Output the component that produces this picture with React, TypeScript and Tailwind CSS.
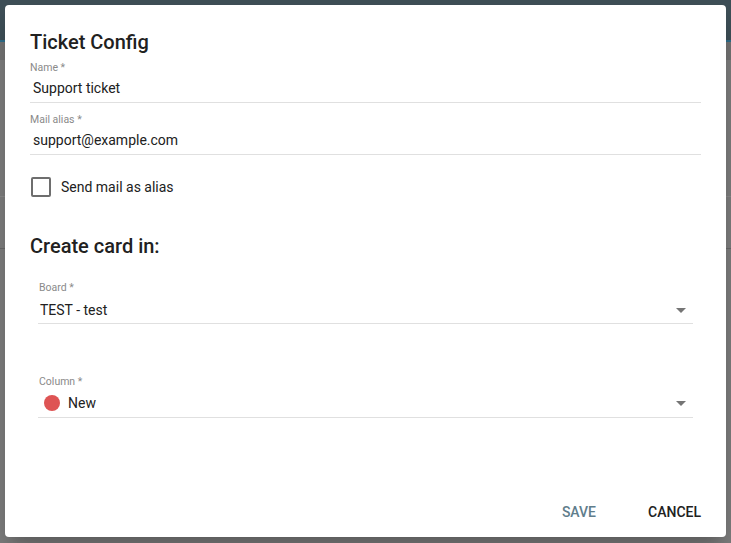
import { useState } from "react";

function Caret() {
  return (
    <svg width="10" height="5" viewBox="0 0 10 5" className="shrink-0">
      <path d="M0 0 L10 0 L5 5 Z" fill="#757575" />
    </svg>
  );
}

function TextField({ label, value, className = "" }: { label: string; value: string; className?: string }) {
  return (
    <div className={className}>
      <div className="text-[10.5px] leading-[12px] text-[#8a8a8a]">{label}</div>
      <div className="mt-[4px] h-[25px] border-b border-[#e0e0e0] pl-[3px] text-[14px] leading-[20px] text-[#212121]">
        {value}
      </div>
    </div>
  );
}

export default function App() {
  const [sendAsAlias, setSendAsAlias] = useState(false);

  return (
    <div className="relative w-[731px] h-[543px] overflow-hidden bg-[#7f7f7f] font-['Roboto',sans-serif]">
      {/* dimmed page behind the dialog */}
      <div className="flex flex-col">
        <div className="h-[40px] bg-[#3e4f57]" />
        <div className="h-[20px] bg-[#747474] border-t-2 border-[#2f6f8c]" />
        <div className="h-[137px] border-b border-[#8c8c8c]" />
        <div className="h-[52px] border-b border-[#6a6a6a]" />
      </div>

      {/* dialog */}
      <div className="absolute left-[5px] top-[5px] w-[721px] h-[532px] rounded-[4px] bg-white shadow-[0_11px_15px_-7px_rgba(0,0,0,0.2),0_24px_38px_3px_rgba(0,0,0,0.14)] flex flex-col px-[25px] pt-[25px] pb-[15px]">
        <h2 className="h-[24px] text-[20px] leading-[24px] font-medium text-[#212121]">Ticket Config</h2>

        <TextField label="Name *" value="Support ticket" className="mt-[8px]" />
        <TextField label="Mail alias *" value="support@example.com" className="mt-[11px]" />

        <label className="mt-[22px] flex items-center h-[20px] cursor-pointer">
          <button
            type="button"
            onClick={() => setSendAsAlias(!sendAsAlias)}
            className={`ml-[1px] w-[20px] h-[20px] rounded-[2px] border-2 ${
              sendAsAlias ? "border-[#607d8b] bg-[#607d8b]" : "border-[#6e6e6e] bg-white"
            }`}
          />
          <span className="ml-[10px] text-[14px] leading-[20px] text-[#212121]">Send mail as alias</span>
        </label>

        <h2 className="mt-[37px] h-[24px] text-[20px] leading-[24px] font-medium text-[#212121]">Create card in:</h2>

        <div className="mx-[8px] mt-[24px]">
          <div className="pl-[1px] text-[10.5px] leading-[12px] text-[#8a8a8a]">Board *</div>
          <div className="mt-[6px] h-[24px] border-b border-[#e0e0e0] flex items-start">
            <div className="flex-1 h-[20px] flex items-center justify-between pl-[2px] pr-[7px]">
              <span className="text-[14px] leading-[20px] text-[#212121]">TEST - test</span>
              <Caret />
            </div>
          </div>
        </div>

        <div className="mx-[8px] mt-[52px]">
          <div className="pl-[1px] text-[10.5px] leading-[12px] text-[#8a8a8a]">Column *</div>
          <div className="mt-[5px] h-[25px] border-b border-[#e0e0e0] flex items-start">
            <div className="flex-1 h-[20px] flex items-center pl-[6px] pr-[7px]">
              <span className="w-[16px] h-[16px] rounded-full bg-[#de5454]" />
              <span className="ml-[8px] flex-1 text-[14px] leading-[20px] text-[#212121]">New</span>
              <Caret />
            </div>
          </div>
        </div>

        <div className="mt-auto flex justify-end gap-[52px] text-[14px] leading-[20px] font-medium">
          <button type="button" className="text-[#607d8b]">SAVE</button>
          <button type="button" className="text-[#212121]">CANCEL</button>
        </div>
      </div>
    </div>
  );
}
